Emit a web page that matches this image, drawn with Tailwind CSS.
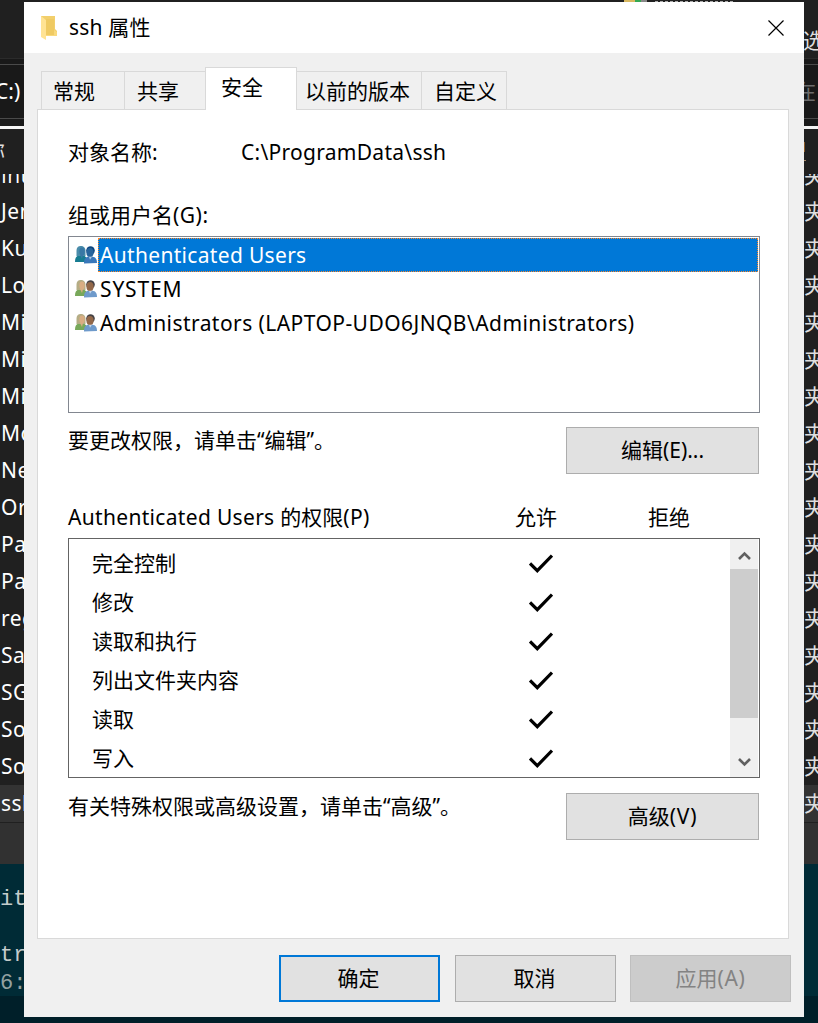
<!DOCTYPE html>
<html lang="zh-CN">
<head>
<meta charset="utf-8">
<title>ssh 属性</title>
<script src="https://cdn.jsdelivr.net/npm/@tailwindcss/browser@4"></script>
</head>
<body class="w-[818px] h-[1023px] overflow-hidden bg-[#1f1f1f] text-black text-[21px] leading-[30px] whitespace-nowrap font-['Noto_Sans','Noto_Sans_CJK_SC',sans-serif]">
<svg class="hidden">
  <symbol id="users" viewBox="0 0 22 18">
    <path class="fill-(--g)" d="M0 16C0 11 2 9 6 9s6 2 6 7z"/>
    <path class="fill-(--h)" d="M1.500 10V5C1.500 1 3.500 0 6 0s4.500 1.500 4.500 5v5z"/>
    <ellipse class="fill-(--f)" cx="7" cy="5.500" rx="2.700" ry="4"/>
    <path class="fill-(--f)" d="M5 9h3l-1 4z"/>
    <path class="fill-(--b)" d="M9 17.500C9 12 11 10.500 15.500 10.500s6.500 2 6.500 6.500z"/>
    <ellipse class="fill-(--k)" cx="15.500" cy="4.500" rx="4.300" ry="4.300"/>
    <ellipse class="fill-(--m)" cx="15" cy="6.500" rx="3.600" ry="4.500"/>
    <path class="fill-white/60" d="M14 10.800h3l-2 3z"/>
  </symbol>
  <symbol id="check" viewBox="0 0 24 20"><path d="M1 9.500 8.300 16.700 23 1.500" fill="none" stroke="#000" stroke-width="3.200"/></symbol>
</svg>
<div class="grid grid-cols-[24px_780px_14px] h-full">

  <div class="overflow-hidden text-white flex flex-col">
    <div class="h-[58px] bg-[#202020] shrink-0"></div>
    <div class="h-[6px] border-t border-[#2b2b2b] bg-[#191919] shrink-0"></div>
    <div class="h-[55px] border-y border-[#4a4a4a] bg-[#191919] leading-[53px] shrink-0"><span class="-ml-[5px]">C:)</span></div>
    <div class="h-[7px] bg-[#191919] shrink-0"></div>
    <div class="h-[3px] bg-[#f4f4f4] shrink-0"></div>
    <div class="h-[45px] bg-[#202020] leading-[45px] shrink-0 text-[#dedede]"><span class="-ml-[16px]">称</span></div>
    <div class="h-[19px] bg-[#202020] overflow-hidden shrink-0"><div class="-mt-[14px] pl-px tracking-[0.400px] font-['Open_Sans',sans-serif]">Intel</div></div>
    <div class="bg-[#202020] leading-[36px] pl-px tracking-[0.500px] shrink-0">
      <div class="h-[37px]">Jenkins</div><div class="h-[37px]">Kube</div><div class="h-[37px]">Logi</div><div class="h-[37px]">Mi</div><div class="h-[37px]">Mi</div><div class="h-[37px]">Mi</div><div class="h-[37px]">Mo</div><div class="h-[37px]">Net</div><div class="h-[37px]">Ora</div><div class="h-[37px]">Pac</div><div class="h-[37px]">Pac</div><div class="h-[37px]">regid</div><div class="h-[37px]">Sam</div><div class="h-[37px]">SGX</div><div class="h-[37px]">Sof</div><div class="h-[37px]">Sog</div>
    </div>
    <div class="h-[37px] bg-[#333] leading-[36px] pl-px tracking-[0.500px] shrink-0">ssh</div>
    <div class="h-[42px] bg-[#313131] border-t border-[#202020] shrink-0"></div>
    <div class="h-[132px] bg-[#002b36] pt-[22px] text-[#c4cccc] text-[22px] leading-[28px] font-['Liberation_Mono','Noto_Sans_CJK_SC',monospace] shrink-0">
      <div>ith</div><div class="h-[28px]"></div><div>tr</div><div class="text-[#93a1a1]">6:</div>
    </div>
    <div class="grow bg-[#001f29]"></div>
  </div>

  <div class="flex flex-col">
    <div class="h-[2px] bg-[#202020] flex shrink-0"><div class="ml-[600px] w-[11px] bg-[#d8b860]"></div><div class="w-[6px] bg-[#33a852]"></div><div class="w-[6px] bg-[#888]"></div><div class="ml-[8px] mt-px w-[78px] border-t border-dashed border-[#aaa]"></div></div>

    <main class="h-[1015px] bg-[#f0f0f0] flex flex-col shrink-0">
      <header class="h-[51px] bg-white flex items-center shrink-0">
        <svg class="ml-[16px] w-[18px] h-[24px]" viewBox="0 0 18 24"><path d="M1 0h14v13l2 2v5H1z" fill="#f2cf6c"/><path d="M5 3h9v16H5z" fill="#efca63"/><path d="M1 0l5 4v20l-5-3z" fill="#ffe394"/><path d="M14 14l3 2v4H6v-1h8z" fill="#f9d97d"/></svg>
        <h1 class="ml-[11px] -mt-[2px] tracking-[0.200px]">ssh 属性</h1>
        <svg class="ml-auto mr-[20px] w-[16px] h-[16px]" viewBox="0 0 16 16"><path d="M.5.5l15 15M15.500.5l-15 15" stroke="#000" stroke-width="1.200"/></svg>
      </header>

      <nav class="mt-[14px] ml-[17px] h-[43px] flex items-end relative z-10 shrink-0">
        <div class="w-[84px] h-[39px] border border-b-0 border-[#d9d9d9] pl-[11px] leading-[39px]">常规</div>
        <div class="w-[80px] h-[39px] border-t border-[#d9d9d9] pl-[12px] leading-[39px]">共享</div>
        <div class="w-[92px] h-[43px] border border-b-0 border-[#d9d9d9] bg-white pl-[15px] leading-[38px]">安全</div>
        <div class="w-[125px] h-[39px] border-t border-r border-[#d9d9d9] pl-[8px] leading-[39px]">以前的版本</div>
        <div class="w-[85px] h-[39px] border-t border-r border-[#d9d9d9] pl-[12px] leading-[39px]">自定义</div>
      </nav>

      <section class="-mt-px ml-[13px] w-[752px] h-[830px] bg-white border border-[#d9d9d9] pl-[30px] flex flex-col shrink-0">
        <div class="mt-[27px] flex h-[30px]"><div class="w-[173px]">对象名称:</div><div class="tracking-[0.280px]">C:\ProgramData\ssh</div></div>
        <div class="mt-[33px] h-[30px]">组或用户名<span class="tracking-[0.500px]">(G):</span></div>
        <div class="mt-[6px] w-[692px] h-[177px] border border-[#828790] p-px shrink-0 leading-[34px]">
          <div class="h-[34px] flex items-center pl-[5px] [--g:#167c91] [--h:#4a8caa] [--f:#3878a5] [--b:#3a78ba] [--k:#0d4681] [--m:#26649c]"><svg class="w-[22px] h-[18px] mr-px"><use href="#users"/></svg><div class="grow h-full bg-[#0078d7] text-white pl-[2px] tracking-[0.320px] outline-1 -outline-offset-1 outline-dotted outline-[#ff8728]">Authenticated Users</div></div>
          <div class="h-[34px] flex items-center pl-[5px] tracking-[0.850px] [--g:#78a85a] [--h:#b5ad85] [--f:#d9ad83] [--b:#6e9acb] [--k:#454245] [--m:#936849]"><svg class="w-[22px] h-[18px] mr-[3px]"><use href="#users"/></svg>SYSTEM</div>
          <div class="h-[34px] flex items-center pl-[5px] [--g:#78a85a] [--h:#b5ad85] [--f:#d9ad83] [--b:#6e9acb] [--k:#454245] [--m:#936849]"><svg class="w-[22px] h-[18px] mr-[3px]"><use href="#users"/></svg><span class="tracking-[0.440px]">Administrators (LAPTOP-UDO6JNQB\Administrators)</span></div>
        </div>
        <div class="mt-[14px] flex h-[47px] shrink-0"><p class="w-[498px] leading-[24px] font-['Noto_Sans_CJK_SC']">要更改权限，请单击<span class="font-['Noto_Sans']">“</span>编辑<span class="font-['Noto_Sans']">”</span>。</p><button class="w-[193px] h-[47px] bg-[#e1e1e1] border border-[#adadad] pb-[2px]">编辑(E)...</button></div>
        <div class="mt-[28px] flex h-[30px] shrink-0"><div class="w-[447px]"><span class="tracking-[0.320px]">Authenticated Users </span>的权限<span class="tracking-[0.400px]">(P)</span></div><div class="w-[133px]">允许</div><div>拒绝</div></div>
        <div class="mt-[6px] w-[692px] h-[240px] border border-[#646464] flex shrink-0 pr-px">
          <div class="grow pt-[5px] leading-[39px] overflow-hidden">
            <div class="h-[39px] flex items-center pl-[23px]"><span class="w-[437px]">完全控制</span><svg class="w-[24px] h-[20px]"><use href="#check"/></svg></div>
            <div class="h-[39px] flex items-center pl-[23px]"><span class="w-[437px]">修改</span><svg class="w-[24px] h-[20px]"><use href="#check"/></svg></div>
            <div class="h-[39px] flex items-center pl-[23px]"><span class="w-[437px]">读取和执行</span><svg class="w-[24px] h-[20px]"><use href="#check"/></svg></div>
            <div class="h-[39px] flex items-center pl-[23px]"><span class="w-[437px]">列出文件夹内容</span><svg class="w-[24px] h-[20px]"><use href="#check"/></svg></div>
            <div class="h-[39px] flex items-center pl-[23px]"><span class="w-[437px]">读取</span><svg class="w-[24px] h-[20px]"><use href="#check"/></svg></div>
            <div class="h-[39px] flex items-center pl-[23px]"><span class="w-[437px]">写入</span><svg class="w-[24px] h-[20px]"><use href="#check"/></svg></div>
          </div>
          <div class="w-[28px] bg-[#f0f0f0] flex flex-col shrink-0">
            <svg class="h-[30px] w-[28px]" viewBox="0 0 28 30"><path d="M9 20l5.500-5.500L20 20" fill="none" stroke="#606060" stroke-width="2.600"/></svg>
            <div class="h-[149px] bg-[#cdcdcd]"></div>
            <svg class="mt-auto h-[30px] w-[28px]" viewBox="0 0 28 30"><path d="M9 12l5.500 5.500L20 12" fill="none" stroke="#606060" stroke-width="2.600"/></svg>
          </div>
        </div>
        <div class="mt-[15px] flex h-[47px] shrink-0"><p class="w-[498px] leading-[24px] font-['Noto_Sans_CJK_SC']">有关特殊权限或高级设置，请单击<span class="font-['Noto_Sans']">“</span>高级<span class="font-['Noto_Sans']">”</span>。</p><button class="w-[193px] h-[47px] bg-[#e1e1e1] border border-[#adadad] pb-[2px]">高级<span class="tracking-[0.700px]">(V)</span></button></div>
      </section>

      <footer class="mt-[16px] ml-[255px] flex shrink-0">
        <button class="w-[161px] h-[47px] bg-[#e1e1e1] border-2 border-[#0078d7] pb-[2px] pr-[2px]">确定</button>
        <button class="ml-[15px] w-[161px] h-[47px] bg-[#e1e1e1] border border-[#adadad] pb-[2px] pr-[2px]">取消</button>
        <button class="ml-[14px] w-[161px] h-[47px] bg-[#ccc] border border-[#bfbfbf] text-[#838383] pb-[2px]">应用<span class="tracking-[0.700px]">(A)</span></button>
      </footer>
    </main>
    <div class="grow bg-[#001f29]"></div>
  </div>

  <div class="overflow-hidden text-[#dedede] flex flex-col">
    <div class="h-[58px] bg-[#202020] shrink-0 pt-[25px]"><span class="-ml-px">选</span></div>
    <div class="h-[6px] border-t border-[#2b2b2b] bg-[#191919] shrink-0"></div>
    <div class="h-[55px] border-y border-[#4a4a4a] bg-[#191919] text-[#6c6c6c] leading-[53px] shrink-0"><span class="-ml-[9px]">在</span></div>
    <div class="h-[7px] bg-[#191919] shrink-0"></div>
    <div class="h-[3px] bg-[#f4f4f4] shrink-0"></div>
    <div class="h-[45px] bg-[#202020] shrink-0 pt-[13px]"><div class="w-px h-[10px] bg-[#8a5a28]"></div><div class="w-[2px] h-px mt-[8px] bg-[#a8896a]"></div></div>
    <div class="h-[19px] bg-[#202020] overflow-hidden shrink-0"><div class="-mt-[14px]">夹</div></div>
    <div class="bg-[#202020] leading-[36px] shrink-0">
      <div class="h-[37px]">夹</div><div class="h-[37px]">夹</div><div class="h-[37px]">夹</div><div class="h-[37px]">夹</div><div class="h-[37px]">夹</div><div class="h-[37px]">夹</div><div class="h-[37px]">夹</div><div class="h-[37px]">夹</div><div class="h-[37px]">夹</div><div class="h-[37px]">夹</div><div class="h-[37px]">夹</div><div class="h-[37px]">夹</div><div class="h-[37px]">夹</div><div class="h-[37px]">夹</div><div class="h-[37px]">夹</div><div class="h-[37px]">夹</div>
    </div>
    <div class="h-[37px] bg-[#333] leading-[36px] shrink-0">夹</div>
    <div class="h-[42px] bg-[#313131] border-t border-[#202020] shrink-0"></div>
    <div class="h-[132px] bg-[#002b36] shrink-0"></div>
    <div class="grow bg-[#001f29]"></div>
  </div>
</div>
</body>
</html>
